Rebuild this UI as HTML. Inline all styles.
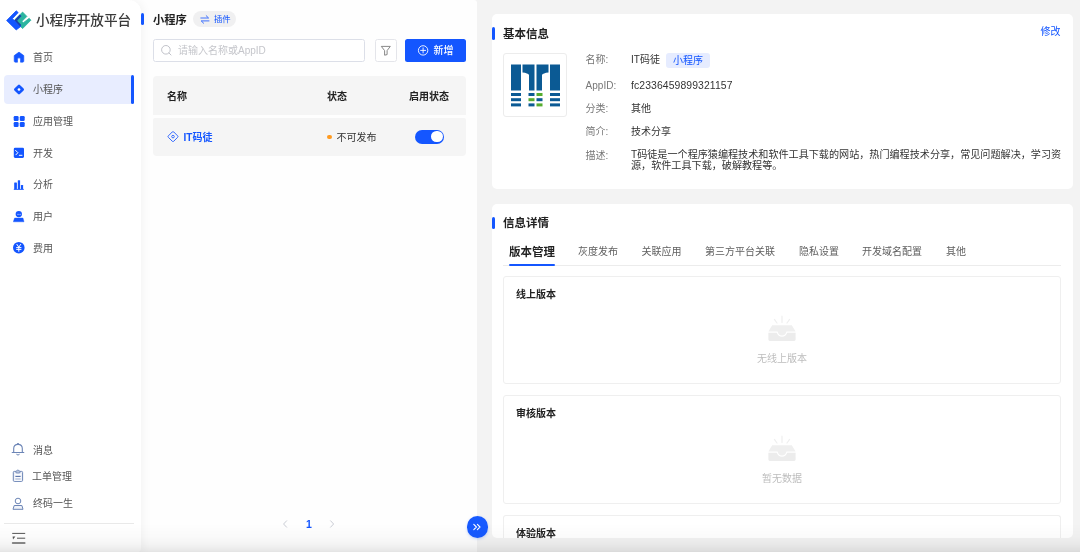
<!DOCTYPE html>
<html lang="zh-CN">
<head>
<meta charset="utf-8">
<title>小程序开放平台</title>
<style>
*{box-sizing:border-box;margin:0;padding:0}
html,body{width:1080px;height:552px;overflow:hidden}
body{position:relative;background:#f3f3f3;font-family:"Liberation Sans","Noto Sans CJK SC",sans-serif;font-size:10px;color:#333;-webkit-font-smoothing:antialiased}
.abs{position:absolute}
.t{position:absolute;white-space:nowrap;line-height:14px;height:14px;margin-top:.8px}
b,.b{font-weight:700}
#side{will-change:transform;position:absolute;left:0;top:0;width:141px;height:552px;background:#fff;border-radius:0 12px 4px 0;z-index:3;box-shadow:3px 0 8px rgba(0,0,0,.04)}
#mid{position:absolute;left:131px;top:0;width:346px;height:552px;background:#fefefe;border-radius:0 3px 0 0;z-index:2}
.nav{position:absolute;left:33px;font-size:10px;color:#555;line-height:14px;white-space:nowrap}
.ico{position:absolute}
.card{position:absolute;background:#fff;border-radius:5px}
.sub{position:absolute;border:1px solid #efefef;border-radius:3px;background:#fff}
.lab{margin-top:.8px;position:absolute;left:585.6px;color:#777;font-size:10px;line-height:14px;white-space:nowrap}
.val{margin-top:.8px;position:absolute;left:631px;color:#333;font-size:10px;line-height:14px;white-space:nowrap}
.tab{margin-top:.8px;position:absolute;top:244px;font-size:10px;line-height:14px;color:#606060;white-space:nowrap}
.empty{margin-top:.8px;position:absolute;font-size:10px;line-height:14px;color:#bdbdbd;white-space:nowrap;text-align:center;width:100px;left:732px}
#fade{position:absolute;left:0;top:524px;width:1080px;height:28px;z-index:9;pointer-events:none;background:linear-gradient(to bottom,rgba(0,0,0,0) 0,rgba(0,0,0,.015) 12px,rgba(0,0,0,.04) 20px,rgba(0,0,0,.075) 25px,rgba(0,0,0,.1) 28px)}
</style>
</head>
<body>

<!-- ============ SIDEBAR ============ -->
<div id="side">
  <svg class="ico" style="left:0;top:0" width="40" height="40" viewBox="0 0 40 40">
    <path d="M22.6 12.1 L26.9 16.4 L22 21.3 L23.4 22.7 L29.2 18.3 L30.9 20.2 L22.6 28.6 L14.4 20.2 Z" fill="#2cb5a0" stroke="#2cb5a0" stroke-width=".8" stroke-linejoin="round"/>
    <path d="M16.2 10.8 L18.2 12.6 L12.4 18.7 L21 26.3 L16.2 29.9 L6.6 20.5 Z" fill="#1456ff" stroke="#1456ff" stroke-width=".8" stroke-linejoin="round"/>
    <path d="M19.8 14.4 L21.5 15.9 L17.2 20.7 L21.3 25 L20 26.3 L14.4 20.2 Z" fill="#1a3fae"/>
  </svg>
  <div class="t" style="margin-top:0;left:36px;top:11px;font-size:13.6px;line-height:20px;height:20px;color:#3a3a3a;font-weight:500">小程序开放平台</div>

  <div class="abs" style="left:4px;top:75px;width:130px;height:29px;background:#e8edff;border-radius:4px 2px 2px 4px"></div>
  <div class="abs" style="left:131px;top:75px;width:3px;height:29px;background:#1456ff;border-radius:2px"></div>


  <!-- nav icons -->
  <svg class="ico" style="left:13px;top:51px" width="12" height="12" viewBox="0 0 12 12"><path d="M6 1.1 L1.2 4.6 V10.1 Q1.2 11.2 2.3 11.2 H4.5 V8.2 Q4.5 6.8 6 6.8 Q7.5 6.8 7.5 8.2 V11.2 H9.7 Q10.8 11.2 10.8 10.1 V4.6 Z" fill="#1456ff" stroke="#1456ff" stroke-width=".6" stroke-linejoin="round"/></svg>
  <svg class="ico" style="left:13px;top:83px" width="12" height="13" viewBox="0 0 12 13"><rect x="2.1" y="2.6" width="7.8" height="7.8" rx="1.3" transform="rotate(45 6 6.5)" fill="#1456ff"/><circle cx="6" cy="6.5" r="1.35" fill="#fff"/></svg>
  <svg class="ico" style="left:13px;top:115px" width="12" height="13" viewBox="0 0 12 13"><rect x=".7" y="1" width="4.9" height="4.9" rx="1.2" fill="#1456ff"/><rect x="6.8" y="1" width="4.9" height="4.9" rx="1.2" fill="#1456ff"/><rect x=".7" y="7" width="4.9" height="4.9" rx="1.2" fill="#1456ff"/><rect x="6.8" y="7" width="4.9" height="4.9" rx="1.2" fill="#1456ff"/></svg>
  <svg class="ico" style="left:13px;top:147px" width="12" height="12" viewBox="0 0 12 12"><rect x=".8" y=".7" width="10.2" height="10.2" rx="1.3" fill="#1456ff"/><path d="M2.6 3.4 L4.9 5.7 L2.9 7.8" fill="none" stroke="#fff" stroke-width="1" stroke-linecap="round" stroke-linejoin="round"/><path d="M6.3 8.3 H9" stroke="#fff" stroke-width="1" stroke-linecap="round"/></svg>
  <svg class="ico" style="left:13px;top:179px" width="12" height="12" viewBox="0 0 12 12"><rect x="1.2" y="3.6" width="2.7" height="6.6" rx=".5" fill="#1456ff"/><rect x="4.8" y="1.2" width="2.3" height="9" rx=".5" fill="#1456ff"/><rect x="7.9" y="6" width="2.2" height="4.2" rx=".5" fill="#1456ff"/><rect x=".8" y="9.9" width="10" height=".9" fill="#1456ff"/></svg>
  <svg class="ico" style="left:13px;top:210px" width="12" height="13" viewBox="0 0 12 13"><circle cx="5.8" cy="4.1" r="3.15" fill="#1456ff"/><circle cx="5" cy="4.2" r=".55" fill="#fff"/><circle cx="7.1" cy="4.2" r=".55" fill="#fff"/><path d="M1.6 8 H10 L11 11.8 H.3 Z" fill="#1456ff" stroke="#1456ff" stroke-width=".4" stroke-linejoin="round"/></svg>
  <svg class="ico" style="left:12px;top:241px" width="14" height="14" viewBox="0 0 14 14"><circle cx="6.8" cy="6.7" r="5.8" fill="#1456ff"/><path d="M4.9 3.4 L6.8 6.2 L8.7 3.4 M4.6 6.6 H9 M4.6 8.4 H9 M6.8 6.2 V10.3" fill="none" stroke="#fff" stroke-width="1" stroke-linecap="round"/></svg>

  <svg class="ico" style="left:11px;top:442px" width="15" height="15" viewBox="0 0 15 15"><path d="M2.7 10.4 V6.6 Q2.7 2.4 7 2.4 Q11.3 2.4 11.3 6.6 V10.4" fill="none" stroke="#6c85b6" stroke-width="1.1"/><path d="M1.2 10.5 H12.8" stroke="#6c85b6" stroke-width="1.1" stroke-linecap="round"/><path d="M5.4 12.2 Q7 14 8.6 12.2" fill="none" stroke="#6c85b6" stroke-width="1"/><path d="M6 2 Q7 .6 8 2" fill="#6c85b6" stroke="#6c85b6" stroke-width=".8"/></svg>
  <svg class="ico" style="left:12px;top:469px" width="12" height="14" viewBox="0 0 12 14"><rect x="1.3" y="2.4" width="9.3" height="10" rx="1" fill="#eef1f8" stroke="#6c85b6" stroke-width="1"/><path d="M3.6 2.6 L5.9 .9 L8.3 2.6 L7.6 4 H4.3 Z" fill="#b9c5dd" stroke="#6c85b6" stroke-width=".8" stroke-linejoin="round"/><path d="M3.4 7.4 H8.6" stroke="#4d69a3" stroke-width="1"/><path d="M3.4 10 H8.6" stroke="#8fa2c8" stroke-width="1"/><path d="M2.6 5.6 H9.4 M2.6 8.7 H9.4 M2.6 11.3 H9.4" stroke="#fff" stroke-width=".9"/></svg>
  <svg class="ico" style="left:12px;top:496px" width="13" height="15" viewBox="0 0 13 15"><circle cx="6" cy="5" r="2.8" fill="none" stroke="#6c85b6" stroke-width="1"/><path d="M2.2 9.5 H9.9 L11 13.3 H1 Z" fill="#f1f3f9" stroke="#6c85b6" stroke-width="1" stroke-linejoin="round"/></svg>
  <svg class="ico" style="left:11px;top:530px" width="16" height="16" viewBox="0 0 16 16"><path d="M1.6 3.4 H13.8 M6.4 8.2 H13.8" stroke="#555" stroke-width="1" stroke-linecap="round"/><path d="M1.6 13 H13.8" stroke="#666" stroke-width="1.6" stroke-linecap="round"/><path d="M1.6 6.6 H4.4 L2 9.4 Z" fill="#555"/></svg>
  <div class="nav" style="top:51px">首页</div>
  <div class="nav" style="top:83px">小程序</div>
  <div class="nav" style="top:115px">应用管理</div>
  <div class="nav" style="top:147px">开发</div>
  <div class="nav" style="top:178px">分析</div>
  <div class="nav" style="top:210px">用户</div>
  <div class="nav" style="top:242px">费用</div>

  <div class="nav" style="top:444px">消息</div>
  <div class="nav" style="left:32px;top:470px">工单管理</div>
  <div class="nav" style="top:497px">终码一生</div>
  <div class="abs" style="left:4px;top:523px;width:130px;height:1px;background:#e9e9e9"></div>
</div>

<!-- ============ MIDDLE LIST ============ -->
<div id="mid"></div>


<div id="content" style="position:absolute;left:0;top:0;width:1080px;height:552px;z-index:5;will-change:transform">
  <!-- middle header -->
  <div class="abs" style="left:141px;top:13px;width:3px;height:12px;background:#1456ff;border-radius:1.5px"></div>
  <div class="t b" style="left:153px;top:12px;font-size:11.3px;color:#222">小程序</div>
  <div class="abs" style="left:193.3px;top:11.4px;width:43px;height:16px;border-radius:8px;background:#f0f0f1"></div>
  <svg class="ico" style="left:200px;top:14px" width="10" height="11" viewBox="0 0 10 11"><path d="M.8 4 H8.6 L6.2 1.7 M9 6.9 H1.2 L3.6 9.2" fill="none" stroke="#2a62ff" stroke-width=".9" stroke-linecap="round" stroke-linejoin="round"/></svg>
  <div class="t" style="left:214px;top:11.5px;font-size:8.4px;color:#1456ff">插件</div>

  <!-- search -->
  <div class="abs" style="left:153px;top:39px;width:212px;height:23px;border:1px solid #dcdfe8;border-radius:2.5px;background:#fff"></div>
  <svg class="ico" style="left:160px;top:44px" width="13" height="13" viewBox="0 0 13 13"><circle cx="5.9" cy="5.8" r="4.3" fill="none" stroke="#b9bbc3" stroke-width=".9"/><path d="M9 9 L11 11" stroke="#b9bbc3" stroke-width=".9" stroke-linecap="round"/></svg>
  <div class="t" style="left:178px;top:43px;font-size:10px;color:#c5c6cb">请输入名称或AppID</div>
  <div class="abs" style="left:375px;top:39px;width:22px;height:23px;border:1px solid #e4e5ea;border-radius:2.5px;background:#fff"></div>
  <svg class="ico" style="left:380px;top:45px" width="12" height="12" viewBox="0 0 12 12"><path d="M1.3 1.4 H10.3 L7.1 5.6 V9.6 L4.6 10.2 V5.6 Z" fill="none" stroke="#7a7a7a" stroke-width=".9" stroke-linejoin="round"/></svg>
  <div class="abs" style="left:405px;top:39px;width:61px;height:23px;border-radius:2.5px;background:#1456ff"></div>
  <svg class="ico" style="left:417px;top:44px" width="12" height="12" viewBox="0 0 12 12"><circle cx="6.1" cy="6.4" r="4.7" fill="none" stroke="#fff" stroke-width=".9"/><path d="M3.6 6.4 H8.6 M6.1 3.9 V8.9" stroke="#fff" stroke-width=".9" stroke-linecap="round"/></svg>
  <div class="t" style="left:433.5px;top:43px;font-size:10px;color:#fff;font-weight:500">新增</div>

  <!-- table -->
  <div class="abs" style="left:153px;top:76px;width:313px;height:39px;background:#f5f5f5;border-radius:4px 4px 0 0"></div>
  <div class="t b" style="left:167px;top:89px;color:#222">名称</div>
  <div class="t b" style="left:327px;top:89px;color:#222">状态</div>
  <div class="t b" style="left:409px;top:89px;color:#222">启用状态</div>
  <div class="abs" style="left:153px;top:118px;width:313px;height:37.5px;background:#f5f5f5;border-radius:2px 2px 4px 4px"></div>
  <svg class="ico" style="left:166px;top:130px" width="14" height="14" viewBox="0 0 14 14"><rect x="3.2" y="2.8" width="7.6" height="7.6" rx="1" transform="rotate(45 7 6.6)" fill="none" stroke="#2a62ff" stroke-width=".9"/><circle cx="7" cy="6.6" r="1.3" fill="none" stroke="#2a62ff" stroke-width=".9"/></svg>
  <div class="t b" style="left:183.5px;top:130px;color:#1456ff">IT码徒</div>
  <div class="abs" style="left:327.2px;top:134.7px;width:4.4px;height:4.4px;border-radius:50%;background:#ff9a1f"></div>
  <div class="t" style="left:336.4px;top:130px;color:#333">不可发布</div>
  <div class="abs" style="left:415px;top:129.6px;width:29px;height:14.4px;border-radius:7.2px;background:#1456ff"></div>
  <div class="abs" style="left:431.3px;top:131.1px;width:11.4px;height:11.4px;border-radius:50%;background:#fff"></div>

  <!-- pagination -->
  <svg class="ico" style="left:281px;top:519px" width="8" height="10" viewBox="0 0 8 10"><path d="M5.6 1.8 L2.6 5 L5.6 8.2" fill="none" stroke="#c3c6cf" stroke-width=".9" stroke-linecap="round" stroke-linejoin="round"/></svg>
  <div class="t b" style="margin-top:0;left:306px;top:517px;color:#1456ff;font-size:10.5px">1</div>
  <svg class="ico" style="left:328px;top:519px" width="8" height="10" viewBox="0 0 8 10"><path d="M2.6 1.8 L5.6 5 L2.6 8.2" fill="none" stroke="#c3c6cf" stroke-width=".9" stroke-linecap="round" stroke-linejoin="round"/></svg>
  <div class="abs" style="left:466.5px;top:516.4px;width:21.8px;height:21.8px;border-radius:50%;background:#175aff;box-shadow:0 1px 3px rgba(20,86,255,.25)"></div>
  <svg class="ico" style="left:472.4px;top:522.4px" width="10" height="10" viewBox="0 0 10 10"><path d="M1.8 2.4 L4.4 5 L1.8 7.6 M5.4 2.4 L8 5 L5.4 7.6" fill="none" stroke="#fff" stroke-width="1.1" stroke-linecap="round" stroke-linejoin="round"/></svg>

  <!-- ========== CARD 1 ========== -->
  <div class="card" style="left:491.700px;top:14px;width:581px;height:175px"></div>
  <div class="abs" style="left:491.5px;top:27px;width:3px;height:13px;background:#1456ff;border-radius:1.5px"></div>
  <div class="t b" style="left:503px;top:26px;font-size:11.5px;color:#222">基本信息</div>
  <div class="t" style="left:1040.6px;top:24.4px;font-size:10px;color:#1456ff">修改</div>
  <div class="abs" style="left:503px;top:53px;width:64px;height:64px;border:1px solid #ececec;border-radius:3px;background:#fff"></div>
  <svg class="ico" style="left:503px;top:53px" width="64" height="64" viewBox="0 0 64 64">
    <g fill="#0b5a94">
      <rect x="8" y="11.5" width="10" height="26"/>
      <path d="M19.5 11.500 H31.5 V37.5 H26 V22 Q25 20 19.5 19.5 Z"/>
      <path d="M45.5 11.5 H33.500 V37.5 H39 V22 Q40 20 45.5 19.5 Z"/>
      <rect x="47" y="11.5" width="10" height="26"/>
      <rect x="8" y="40" width="10" height="3"/><rect x="8" y="45.200" width="10" height="3"/><rect x="8" y="50.400" width="10" height="3"/>
      <rect x="47" y="40" width="10" height="3"/><rect x="47" y="45.200" width="10" height="3"/><rect x="47" y="50.400" width="10" height="3"/>
      <rect x="25.500" y="40" width="6" height="3"/><rect x="33.500" y="45.200" width="6" height="3"/><rect x="25.500" y="50.400" width="6" height="3"/>
    </g>
    <g fill="#55ad2f"><rect x="33.500" y="40" width="6" height="3"/><rect x="25.500" y="45.200" width="6" height="3"/><rect x="33.500" y="50.400" width="6" height="3"/></g>
  </svg>
  <div class="lab" style="top:52px">名称:</div>
  <div class="lab" style="top:78px">AppID:</div>
  <div class="lab" style="top:101px">分类:</div>
  <div class="lab" style="top:124px">简介:</div>
  <div class="lab" style="top:148px">描述:</div>
  <div class="val" style="top:52px">IT码徒</div>
  <div class="abs" style="left:665.6px;top:53px;width:44.5px;height:14.5px;border-radius:3px;background:#e6ecff"></div>
  <div class="t" style="left:673px;top:53px;color:#1456ff">小程序</div>
  <div class="val" style="top:78px;font-size:10.4px;letter-spacing:.1px">fc2336459899321157</div>
  <div class="val" style="top:101px">其他</div>
  <div class="val" style="top:124px">技术分享</div>
  <div class="val" style="top:148.500px;width:434px;white-space:normal;line-height:11px;font-size:10.1px">T码徒是一个程序猿编程技术和软件工具下载的网站，热门编程技术分享，常见问题解决，学习资源，软件工具下载，破解教程等。</div>

  <!-- ========== CARD 2 ========== -->
  <div class="card" style="left:491.700px;top:204px;width:581px;height:334px"></div>
  <div class="abs" style="left:491.5px;top:216.500px;width:3px;height:12.500px;background:#1456ff;border-radius:1.5px"></div>
  <div class="t b" style="left:503px;top:215px;font-size:11.5px;color:#222">信息详情</div>
  <div class="tab b" style="left:509px;font-size:11.5px;color:#222">版本管理</div>
  <div class="tab" style="left:578px">灰度发布</div>
  <div class="tab" style="left:641.500px">关联应用</div>
  <div class="tab" style="left:705px">第三方平台关联</div>
  <div class="tab" style="left:799px">隐私设置</div>
  <div class="tab" style="left:862px">开发域名配置</div>
  <div class="tab" style="left:946px">其他</div>
  <div class="abs" style="left:503px;top:265px;width:558px;height:1px;background:#ececec"></div>
  <div class="abs" style="left:509px;top:263.500px;width:46px;height:2px;background:#1456ff;border-radius:1px"></div>

  <div class="sub" style="left:503px;top:276px;width:558px;height:108px"></div>
  <div class="t b" style="left:516px;top:287px;color:#222">线上版本</div>
  <svg class="ico" style="left:766px;top:314px" width="32" height="28" viewBox="0 0 32 28"><use href="#emp"/></svg>
  <div class="empty" style="top:351px">无线上版本</div>

  <div class="sub" style="left:503px;top:395px;width:558px;height:109px"></div>
  <div class="t b" style="left:516px;top:406px;color:#222">审核版本</div>
  <svg class="ico" style="left:766px;top:434px" width="32" height="28" viewBox="0 0 32 28"><use href="#emp"/></svg>
  <div class="empty" style="top:471px">暂无数据</div>

  <div class="sub" style="left:503px;top:515px;width:558px;height:23px;border-bottom:none;border-radius:3px 3px 0 0"></div>
  <div class="t b" style="left:516px;top:526px;color:#222">体验版本</div>
</div>
<svg width="0" height="0" style="position:absolute"><defs><g id="emp">
  <path d="M16 2.200 V8.400 M8.400 5.400 L11 9 M23.600 5.400 L21 9" stroke="#efefef" stroke-width="1.2" stroke-linecap="round" fill="none"/>
  <path d="M6.200 11.300 H25.800 L29.600 17.600 H20.400 Q19.600 21.600 16 21.600 Q12.400 21.600 11.600 17.600 H2.400 Z" fill="#efefef"/>
  <path d="M2.400 18.700 H10.800 Q12.200 22.800 16 22.800 Q19.800 22.800 21.200 18.700 H29.600 V25.500 Q29.600 26.900 28.200 26.900 H3.800 Q2.400 26.900 2.400 25.500 Z" fill="#ececec"/>
</g></defs></svg>

<div id="fade"></div>
</body>
</html>
